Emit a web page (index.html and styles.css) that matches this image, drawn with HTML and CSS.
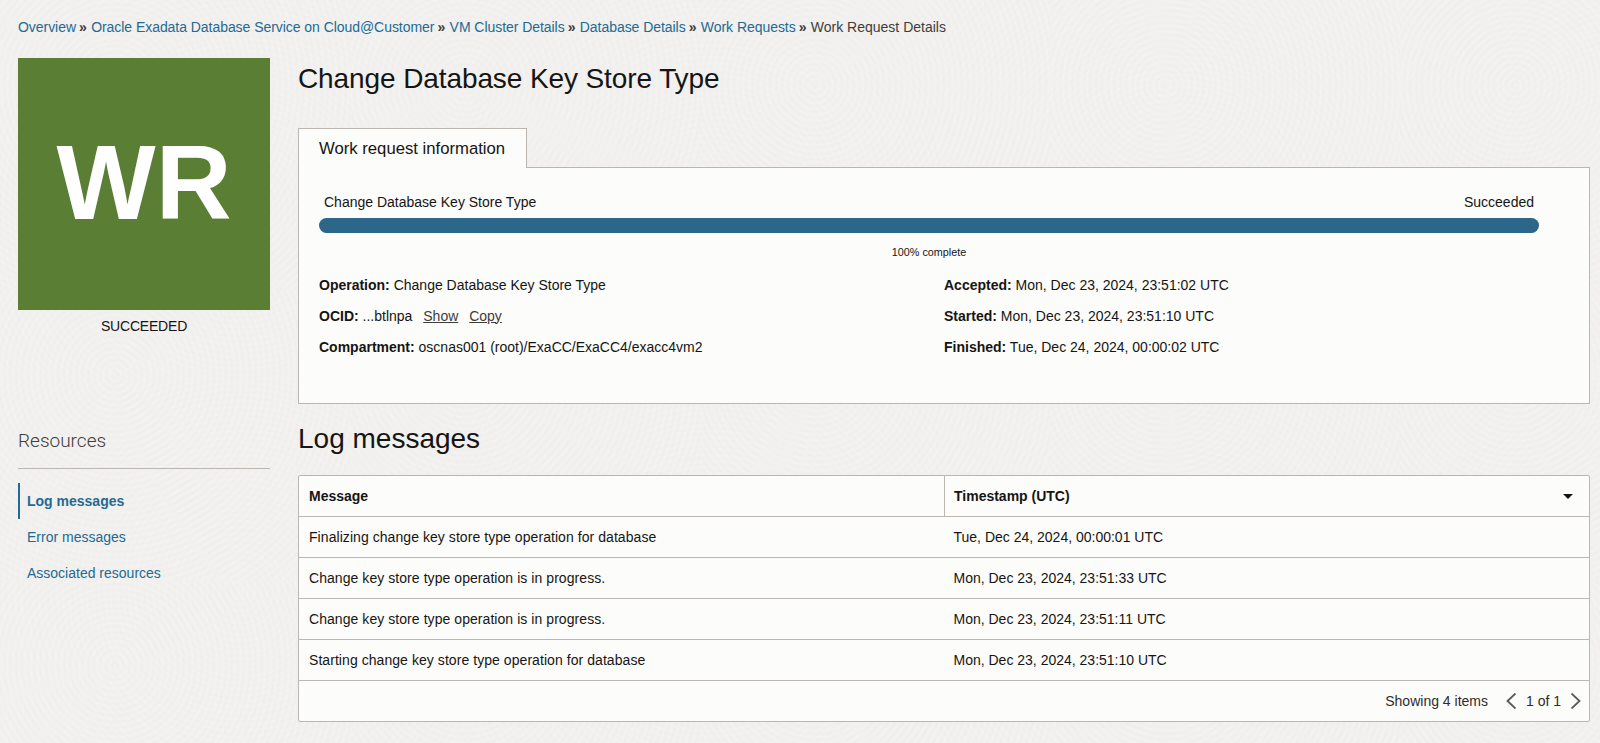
FILE: index.html
```html
<!DOCTYPE html>
<html lang="en">
<head>
    <meta charset="UTF-8">
    <meta name="viewport" content="width=device-width, initial-scale=1.0">
    <title>Work Request Details</title>
    <link rel="stylesheet" href="styles.css">
</head>
<body>
    <nav class="breadcrumbs">
        <a href="#">Overview</a><span class="sep">»</span>
        <a href="#">Oracle Exadata Database Service on Cloud@Customer</a><span class="sep">»</span>
        <a href="#">VM Cluster Details</a><span class="sep">»</span>
        <a href="#">Database Details</a><span class="sep">»</span>
        <a href="#">Work Requests</a><span class="sep">»</span>
        <span>Work Request Details</span>
    </nav>

    <div class="page">
        <aside class="sidebar">
            <div class="tile">WR</div>
            <div class="tile-status">SUCCEEDED</div>

            <h3 class="resources-title">Resources</h3>
            <ul class="resources-menu">
                <li class="active"><a href="#">Log messages</a></li>
                <li><a href="#">Error messages</a></li>
                <li><a href="#">Associated resources</a></li>
            </ul>
        </aside>

        <main class="content">
            <h1>Change Database Key Store Type</h1>

            <div class="tab">Work request information</div>
            <section class="panel">
                <div class="progress-labels">
                    <span>Change Database Key Store Type</span>
                    <span>Succeeded</span>
                </div>
                <div class="progress-bar"></div>
                <div class="progress-text">100% complete</div>

                <div class="details">
                    <div><b>Operation:</b> Change Database Key Store Type</div>
                    <div><b>Accepted:</b> Mon, Dec 23, 2024, 23:51:02 UTC</div>
                    <div><b>OCID:</b> ...btlnpa <a class="action" href="#">Show</a> <a class="action" href="#">Copy</a></div>
                    <div><b>Started:</b> Mon, Dec 23, 2024, 23:51:10 UTC</div>
                    <div><b>Compartment:</b> oscnas001 (root)/ExaCC/ExaCC4/exacc4vm2</div>
                    <div><b>Finished:</b> Tue, Dec 24, 2024, 00:00:02 UTC</div>
                </div>
            </section>

            <h2>Log messages</h2>

            <div class="table-box">
                <table>
                    <thead>
                        <tr>
                            <th class="col-message">Message</th>
                            <th class="col-time">
                                <span class="th-inner">
                                    Timestamp (UTC)
                                    <svg class="sort-icon" width="10" height="5" viewBox="0 0 10 5"><path d="M0 0h10L5 5z"/></svg>
                                </span>
                            </th>
                        </tr>
                    </thead>
                    <tbody>
                        <tr>
                            <td>Finalizing change key store type operation for database</td>
                            <td>Tue, Dec 24, 2024, 00:00:01 UTC</td>
                        </tr>
                        <tr>
                            <td>Change key store type operation is in progress.</td>
                            <td>Mon, Dec 23, 2024, 23:51:33 UTC</td>
                        </tr>
                        <tr>
                            <td>Change key store type operation is in progress.</td>
                            <td>Mon, Dec 23, 2024, 23:51:11 UTC</td>
                        </tr>
                        <tr>
                            <td>Starting change key store type operation for database</td>
                            <td>Mon, Dec 23, 2024, 23:51:10 UTC</td>
                        </tr>
                    </tbody>
                </table>
                <div class="table-footer">
                    <span class="item-count">Showing 4 items</span>
                    <svg class="pager-icon" width="10" height="16" viewBox="0 0 10 16"><path d="M9.5 .5L1.5 8l8 7.5"/></svg>
                    <span class="page-count">1 of 1</span>
                    <svg class="pager-icon" width="10" height="16" viewBox="0 0 10 16"><path d="M.5 .5l8 7.5-8 7.5"/></svg>
                </div>
            </div>
        </main>
    </div>
</body>
</html>
```

FILE: styles.css
```css
html, body {
    height: 100%;
}
body {
    margin: 0;
    padding: 0 10px 0 18px;
    box-sizing: border-box;
    overflow: hidden;
    font-family: "Liberation Sans", Arial, sans-serif;
    font-size: 14px;
    color: #161513;
    background-color: #f1f0ee;
    /* faint fingerprint texture */
    background-image:
        repeating-radial-gradient(circle at 115px 85px, rgba(255,255,255,0.18) 0, rgba(255,255,255,0) 3px, rgba(255,255,255,0.18) 6px),
        repeating-radial-gradient(circle at 240px 210px, rgba(226,224,220,0.14) 0, rgba(226,224,220,0) 3px, rgba(226,224,220,0.14) 6px);
    background-size: 350px 290px, 470px 380px;
}
a {
    color: #236a92;
    text-decoration: none;
}

.breadcrumbs {
    height: 58px;
    line-height: 55px;
    color: #3f3d3a;
    white-space: nowrap;
}
.breadcrumbs a {
    letter-spacing: -0.05px;
}
.breadcrumbs .sep {
    margin: 0 0.5px 0 3px;
    font-weight: bold;
    color: #3f3d3a;
}

.page {
    display: flex;
    gap: 28px;
}

/* left column */
.sidebar {
    width: 252px;
    flex: none;
}
.tile {
    height: 250px;
    padding-bottom: 2px;
    display: flex;
    align-items: center;
    justify-content: center;
    font-size: 105px;
    font-weight: bold;
    color: #fff;
    background-color: #5b7e35;
}
.tile-status {
    margin-top: 8px;
    line-height: 16px;
    text-align: center;
    letter-spacing: -0.2px;
}
.resources-title {
    margin: 96px 0 0;
    padding-bottom: 16px;
    border-bottom: 1px solid #bcb6b1;
    font-family: Roboto, "Liberation Sans", sans-serif;
    font-size: 19px;
    font-weight: 300;
    line-height: 22px;
    color: #3f3d3a;
}
.resources-menu {
    list-style: none;
    margin: 14px 0 0;
    padding: 0;
}
.resources-menu li {
    height: 36px;
    line-height: 36px;
    padding-left: 7px;
    border-left: 2px solid transparent;
}
.resources-menu li.active {
    border-left-color: #236a92;
    font-weight: bold;
}

/* right column */
.content {
    flex: 1;
    min-width: 0;
}
h1, h2 {
    margin: 0;
    font-size: 28px;
    font-weight: normal;
    line-height: 42px;
}
h1 {
    letter-spacing: -0.1px;
}
.tab {
    width: 187px;
    height: 39px;
    margin-top: 28px;
    margin-bottom: -1px;
    padding: 0 20px;
    position: relative;
    line-height: 40px;
    font-size: 16.7px;
    white-space: nowrap;
    background-color: #fcfcfa;
    border: 1px solid #bcb6b1;
    border-bottom: none;
}
.panel {
    height: 237px;
    box-sizing: border-box;
    padding: 26px 50px 0 20px;
    background-color: #fcfcfa;
    border: 1px solid #bcb6b1;
}
.progress-labels {
    display: flex;
    justify-content: space-between;
    padding: 0 5px;
    line-height: 16px;
}
.progress-bar {
    height: 15px;
    margin-top: 8px;
    border-radius: 8px;
    background-color: #2c6689;
}
.progress-text {
    margin-top: 12px;
    line-height: 14px;
    font-size: 10.8px;
    text-align: center;
}
.details {
    display: grid;
    grid-template-columns: 625px 1fr;
    grid-auto-rows: 31px;
    align-items: center;
    margin-top: 10px;
}
.action {
    margin-left: 7px;
    color: #3f3d3a;
    text-decoration: underline;
}

h2 {
    margin-top: 14px;
}
.table-box {
    margin-top: 15px;
    background-color: #fcfcfa;
    border: 1px solid #bcb6b1;
    border-radius: 2px;
}
table {
    width: 100%;
    border-collapse: collapse;
    table-layout: fixed;
}
th, td {
    height: 40px;
    padding: 0 10px;
    text-align: left;
    border-bottom: 1px solid #bcb6b1;
}
td:first-child {
    letter-spacing: 0.06px;
}
td:last-child {
    padding-left: 9px;
}
.col-message {
    width: 625px;
    border-right: 1px solid #bcb6b1;
}
.col-time {
    padding-left: 9px;
}
.th-inner {
    display: flex;
    align-items: center;
    justify-content: space-between;
    padding-right: 6px;
}
.sort-icon {
    fill: #161513;
}
.table-footer {
    height: 40px;
    display: flex;
    align-items: center;
    justify-content: flex-end;
    padding-right: 8px;
    color: #2f2d2a;
}
.item-count {
    margin-right: 18px;
}
.page-count {
    margin: 0 10px;
}
.pager-icon {
    fill: none;
    stroke: #5a5753;
    stroke-width: 1.8;
}
```
